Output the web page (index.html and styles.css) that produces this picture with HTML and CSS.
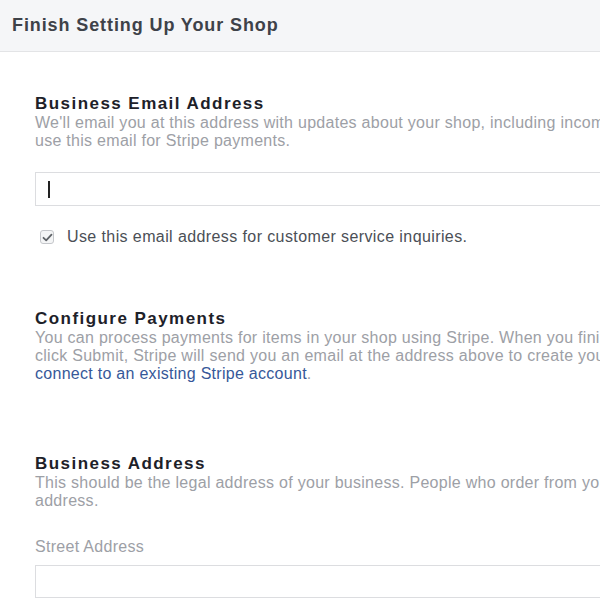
FILE: index.html
```html
<!DOCTYPE html>
<html>
<head>
<meta charset="utf-8">
<link rel="stylesheet" href="styles.css">
</head>
<body>
<header class="topbar">
  <h1 class="topbar-title">Finish Setting Up Your Shop</h1>
</header>
<main class="content">
  <section class="section section-email">
    <h2 class="section-title">Business Email Address</h2>
    <p class="section-desc">We'll email you at this address with updates about your shop, including incoming orders. We'll also<br>use this email for Stripe payments.</p>
    <div class="input input-focused"><span class="caret"></span></div>
    <label class="check-row">
      <span class="checkbox"><svg width="11" height="9" viewBox="0 0 11 9"><path d="M1.5 4.8 L4.2 7.3 L9.5 1.6" fill="none" stroke="#5f6368" stroke-width="1.8" stroke-linecap="round" stroke-linejoin="round"/></svg></span>
      <span class="check-label">Use this email address for customer service inquiries.</span>
    </label>
  </section>
  <section class="section section-pay">
    <h2 class="section-title">Configure Payments</h2>
    <p class="section-desc">You can process payments for items in your shop using Stripe. When you finish setting up your shop and<br>click Submit, Stripe will send you an email at the address above to create your account or<br><a class="link" href="#">connect to an existing Stripe account</a>.</p>
  </section>
  <section class="section section-address">
    <h2 class="section-title">Business Address</h2>
    <p class="section-desc">This should be the legal address of your business. People who order from you will see this<br>address.</p>
    <div class="field-label">Street Address</div>
    <div class="input input-street"></div>
  </section>
</main>
</body>
</html>
```
FILE: styles.css
```css
html, body {
  margin: 0;
  padding: 0;
  overflow: hidden;
  background: #ffffff;
  font-family: "Liberation Sans", Arial, sans-serif;
}
.topbar {
  height: 52px;
  box-sizing: border-box;
  background: #f5f6f8;
  border-bottom: 1px solid #e3e4e6;
  display: flex;
  align-items: center;
  padding-left: 12px;
}
.topbar-title {
  margin: 0;
  font-size: 18px;
  font-weight: bold;
  letter-spacing: 0.9px;
  color: #3e4249;
}
.content {
  width: 900px;
  padding-left: 35px;
}
.section-title {
  margin: 0;
  font-size: 17px;
  font-weight: bold;
  letter-spacing: 1.45px;
  color: #1d2129;
  line-height: 20px;
}
.section-desc {
  margin: 0;
  font-size: 16px;
  letter-spacing: 0.28px;
  line-height: 18px;
  color: #9da0a6;
}
.link {
  color: #365899;
  text-decoration: none;
}
.section-email { padding-top: 42px; }
.section-pay { padding-top: 63px; }
.section-address { padding-top: 71px; }
.input {
  height: 34px;
  box-sizing: border-box;
  border: 1px solid #dcdde0;
  background: #fff;
  display: flex;
  align-items: center;
  padding-left: 12px;
}
.section-email .input { margin-top: 22px; }
.caret {
  width: 2px;
  height: 17px;
  background: #222;
}
.check-row {
  display: flex;
  align-items: center;
  margin-top: 22px;
  padding-left: 5px;
}
.checkbox {
  width: 14px;
  height: 14px;
  box-sizing: border-box;
  border: 1px solid #c5c7cb;
  border-radius: 3px;
  background: #f4f5f6;
  display: flex;
  align-items: center;
  justify-content: center;
}
.check-label {
  margin-left: 13px;
  font-size: 16px;
  letter-spacing: 0.4px;
  color: #4b4f56;
}
.field-label {
  margin-top: 28px;
  font-size: 16px;
  letter-spacing: 0.3px;
  line-height: 18px;
  color: #9da0a6;
}
.section-address .input { margin-top: 9px; }
.input-street { height: 33px; }
```
